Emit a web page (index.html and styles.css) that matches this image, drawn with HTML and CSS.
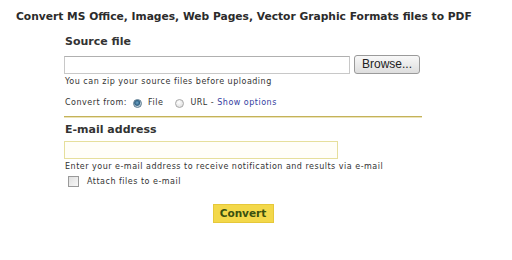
FILE: index.html
```html
<!DOCTYPE html>
<html>
<head>
<meta charset="utf-8">
<link rel="stylesheet" href="styles.css">
</head>
<body>
<div class="page">
  <h1 class="title">Convert MS Office, Images, Web Pages, Vector Graphic Formats files to PDF</h1>
  <div class="form">
    <h2 class="label">Source file</h2>
    <div class="file-row">
      <div class="text-input"></div>
      <div class="browse">Browse...</div>
    </div>
    <p class="hint">You can zip your source files before uploading</p>
    <div class="from-row">
      <span>Convert from:</span>
      <span class="radio checked"></span>
      <span>File</span>
      <span class="radio"></span>
      <span>URL - <span class="link">Show options</span></span>
    </div>
    <div class="divider"></div>
    <h2 class="label">E-mail address</h2>
    <div class="email-input"></div>
    <p class="hint">Enter your e-mail address to receive notification and results via e-mail</p>
    <div class="check-row">
      <span class="checkbox"></span>
      <span>Attach files to e-mail</span>
    </div>
    <div class="submit-row">
      <div class="convert">Convert</div>
    </div>
  </div>
</div>
</body>
</html>
```
FILE: styles.css
```css
html, body { margin: 0; padding: 0; background: #fff; }
body { font-family: "DejaVu Sans", Verdana, sans-serif; color: #333; }
.page { padding: 10px 0 0 16px; }
.title { margin: 0; font-size: 10.7px; font-weight: bold; color: #2b2b2b; line-height: 14px; }
.form { width: 358px; margin: 11px 0 0 48px; }
.label { margin: 0; font-size: 11px; font-weight: bold; color: #333; line-height: 14px; padding-left: 1px; }
.file-row { display: flex; align-items: center; gap: 4px; margin-top: 6px; }
.text-input { width: 284px; height: 16px; border: 1px solid #c8c8c8; border-top-color: #b0b0b0; background: #fff; }
.browse { width: 64px; height: 17px; border: 1px solid #9a9a9a; border-radius: 3px; background: linear-gradient(#f8f8f8, #dedede); font-family: "Liberation Sans", Arial, sans-serif; font-size: 12px; line-height: 17px; text-align: center; color: #222; }
.hint { margin: 3px 0 0 1px; font-size: 8px; letter-spacing: 0.5px; line-height: 10px; color: #333; }
.from-row { display: flex; align-items: center; margin: 11px 0 0 1px; font-size: 8px; letter-spacing: 0.5px; line-height: 10px; color: #333; }
.radio { width: 9px; height: 9px; border-radius: 50%; border: 1px solid #a8a8a8; background: radial-gradient(circle at 40% 35%, #fff, #d8d8d8); box-sizing: border-box; }
.from-row .radio.checked { margin: 0 6px 0 6px; border-color: #5a7a90; background: radial-gradient(circle at 45% 40%, #6fa6c8 0, #2d5f82 45%, #b9c9d4 60%, #e8eef2 100%); }
.from-row .radio { margin: 0 6px 0 12px; }
.link { color: #3340a0; }
.divider { height: 1px; background: #c4b25a; box-shadow: 0 1px 0 #ece4b8; margin-top: 8px; width: 358px; }
.form .divider + .label { margin-top: 6px; }
.label + .email-input { margin-top: 4px; }
.email-input { width: 272px; height: 16px; border: 1px solid #e6df9c; background: #fffef8; }
.check-row { display: flex; align-items: center; gap: 8px; margin: 4px 0 0 4px; font-size: 8px; letter-spacing: 0.5px; line-height: 10px; color: #333; }
.checkbox { width: 11px; height: 11px; border: 1px solid #9a9a9a; box-sizing: border-box; background: linear-gradient(135deg, #e0e0e0, #f8f8f8); }
.submit-row { display: flex; justify-content: center; margin-top: 17px; }
.convert { background: #f3d84a; border: 1px solid #e6c83a; width: 59px; text-align: center; height: 17px; line-height: 17px; font-size: 10.5px; font-weight: bold; color: #3a5010; }
```
